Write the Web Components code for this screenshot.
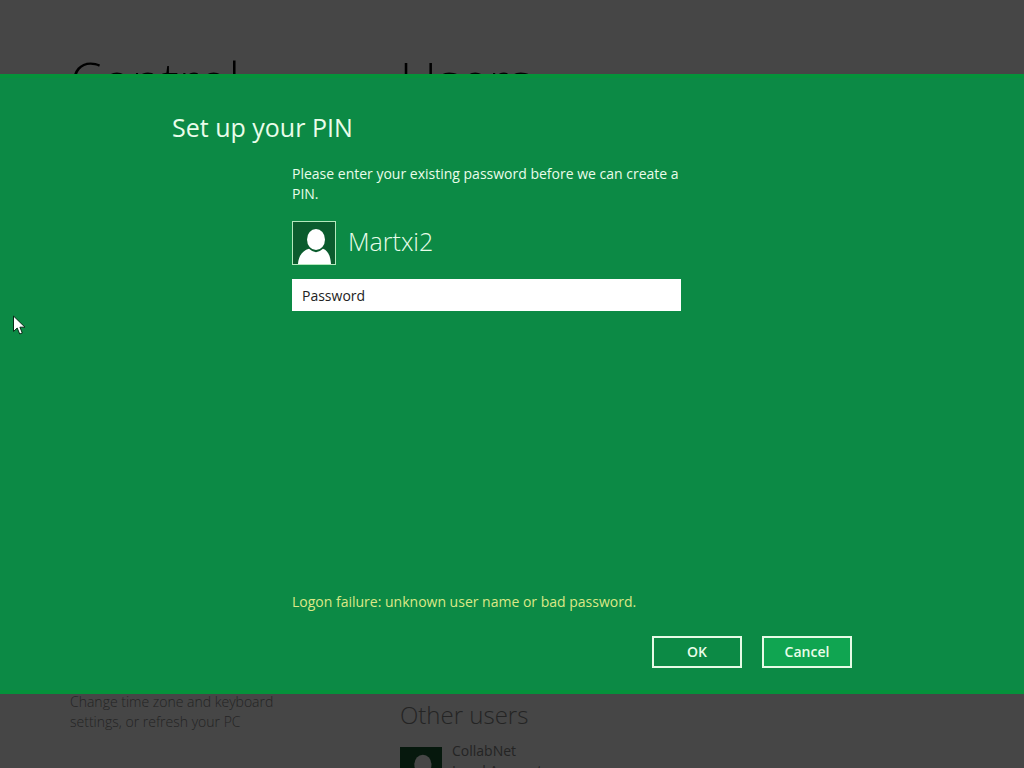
<!DOCTYPE html>
<html lang="en">
<head>
<meta charset="utf-8">
<title>Set up your PIN</title>
<style>
html, body { height: 100%; margin: 0; }
body { background: #464646; font-family: "Open Sans", "Noto Sans", sans-serif; font-size: 14px; line-height: 20px; overflow: hidden; }
</style>
</head>
<body>
<pin-screen></pin-screen>

<template id="user-tile">
<style>
:host { display: block; flex: none; box-sizing: border-box; width: 44px; height: 44px; background: var(--tile-bg, #0b5c2e); border: 1px solid var(--tile-edge, #b4e8bc); color: var(--tile-figure, #fff); }
svg { display: block; width: 100%; height: 100%; }
</style>
<svg viewBox="0 0 42 42" aria-hidden="true">
<path fill="currentColor" d="M5 42C5.500 34 9.500 28.500 16 26.800Q23 33.500 30 26.800C35 28.500 37.500 34 38 42Z"/>
<ellipse cx="23" cy="17.500" rx="9" ry="10.500" fill="currentColor"/>
</svg>
</template>

<template id="metro-button">
<style>
:host { display: block; }
button { box-sizing: border-box; width: 90px; height: 32px; padding: 0; border: 2px solid #e6fbe6; background: var(--button-bg, transparent); color: #e9fdea; font: 600 14px/20px "Open Sans", "Noto Sans", sans-serif; }
</style>
<button type="button"><slot></slot></button>
</template>

<template id="settings-page">
<style>
:host { display: grid; grid-template-columns: 210px 1fr; column-gap: 120px; height: 100%; box-sizing: border-box; padding: 44px 70px 0; overflow: hidden; color: #242424; }
section { display: flex; flex-direction: column; justify-content: space-between; min-width: 0; height: 100%; }
h1 { margin: 0; font-size: 51px; line-height: 72px; font-weight: 300; color: #000; }
h2 { margin: 0; font-size: 24px; line-height: 32px; font-weight: 300; }
p { margin: 0; }
.hint { padding-bottom: 36px; font-weight: 300; }
.users { display: grid; row-gap: 16px; height: 69px; }
.user { display: flex; gap: 10px; }
.user p { margin-top: -6px; }
.user span { display: block; }
user-tile { width: 42px; height: 42px; --tile-bg: #06180d; --tile-edge: #06180d; --tile-figure: #464646; }
</style>
<section>
<h1>Control</h1>
<p class="hint">Change time zone and keyboard settings, or refresh your PC</p>
</section>
<section>
<h1>Users</h1>
<div class="users">
<h2>Other users</h2>
<div class="user"><user-tile></user-tile><p><span>CollabNet</span><span>Local Account</span></p></div>
</div>
</section>
</template>

<template id="pin-dialog">
<style>
:host { display: block; box-sizing: border-box; background: #0c8a45; border: solid #05923b; border-width: 4px 0; color: #e9fdea; padding: 29px 24px 22px; }
form { display: flex; flex-direction: column; box-sizing: border-box; max-width: 680px; height: 100%; margin: 0 auto; }
h1 { margin: 0; font-size: 25px; line-height: 40px; font-weight: 400; }
.body { flex: 1; display: flex; flex-direction: column; max-width: 389px; margin-left: 120px; }
p { margin: 0; }
.intro { margin-top: 17px; }
.account { display: flex; gap: 12px; margin-top: 17px; }
.name { font-size: 25px; line-height: 40px; font-weight: 300; }
input { box-sizing: border-box; width: 100%; height: 32px; margin-top: 14px; padding: 0 10px; border: 0; border-radius: 0; background: #fff; color: #222; font: 14px/20px "Open Sans", "Noto Sans", sans-serif; }
input::placeholder { color: #222; opacity: 1; }
.error { margin-top: auto; color: #dbe887; }
.actions { display: flex; justify-content: flex-end; gap: 20px; margin-top: 24px; }
.cancel { --button-bg: #10a551; }
</style>
<form>
<h1>Set up your PIN</h1>
<div class="body">
<p class="intro">Please enter your existing password before we can create a PIN.</p>
<div class="account"><user-tile></user-tile><span class="name">Martxi2</span></div>
<input type="password" placeholder="Password" aria-label="Password">
<p class="error" role="alert">Logon failure: unknown user name or bad password.</p>
</div>
<div class="actions"><metro-button>OK</metro-button><metro-button class="cancel">Cancel</metro-button></div>
</form>
</template>

<template id="pin-screen">
<style>
:host { display: block; position: relative; height: 100vh; overflow: hidden; }
pin-dialog { position: absolute; inset: 74px 0; }
.cursor { position: absolute; left: 13px; top: 315px; width: 13px; height: 20px; }
</style>
<settings-page></settings-page>
<pin-dialog role="dialog" aria-label="Set up your PIN"></pin-dialog>
<svg class="cursor" viewBox="0 0 13 20" aria-hidden="true"><path d="M.5 1V16.500L4.200 13L6.700 19L9.300 18L6.900 12.200H12Z" fill="#fff" stroke="#082c18"/></svg>
</template>

<script>
function register(name) {
  const template = document.getElementById(name);
  customElements.define(name, class extends HTMLElement {
    constructor() {
      super();
      this.attachShadow({ mode: "open" }).append(template.content.cloneNode(true));
    }
  });
}
["user-tile", "metro-button", "settings-page", "pin-dialog", "pin-screen"].forEach(register);
</script>
</body>
</html>
